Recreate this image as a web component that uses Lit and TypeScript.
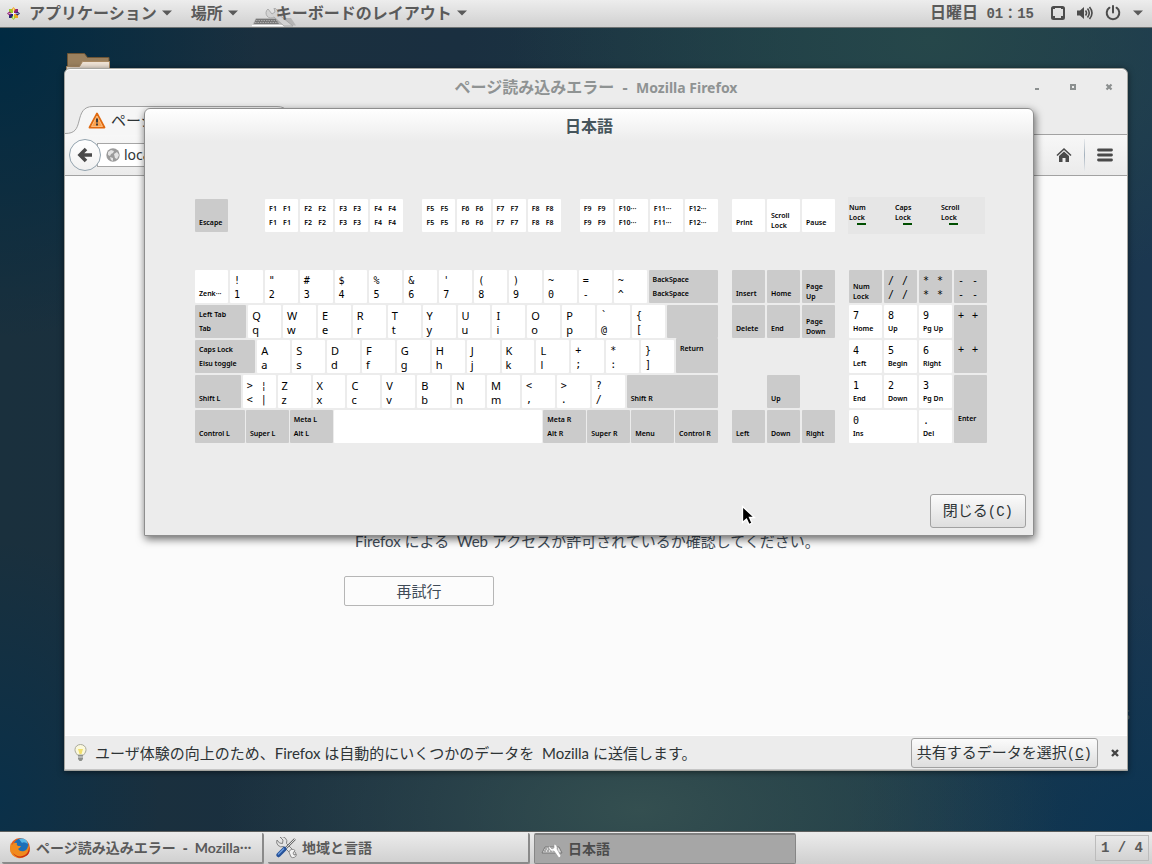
import { LitElement, html, svg, css, nothing } from "lit";
import { customElement, property } from "lit/decorators.js";
import { classMap } from "lit/directives/class-map.js";
import { styleMap } from "lit/directives/style-map.js";

interface KeyDef {
  w?: number;
  dark?: boolean;
  rows: string[][];
  kind?: string;
}

const U = 18;
const light = (top: string, bottom: string): KeyDef => ({ w: U, rows: [[top], [bottom]] });
const dark = (w: number, top: string, bottom: string, kind = ""): KeyDef => ({
  w,
  dark: true,
  rows: [[top], [bottom]],
  kind,
});
const pair = (label: string): KeyDef => ({ w: U, rows: [[label, label], [label, label]] });
const single = (label: string): KeyDef => light(label, label);
const letters = (chars: string): KeyDef[] => [...chars].map((c) => light(c, c.toLowerCase()));

const FUNCTION_GROUPS: KeyDef[][] = [
  ["F1", "F2", "F3", "F4"].map(pair),
  ["F5", "F6", "F7", "F8"].map(pair),
  [pair("F9"), single("F10···"), single("F11···"), single("F12···")],
];

const MAIN_ROWS: KeyDef[][] = [
  [
    light("", "Zenk···"),
    light("!", "1"),
    light('"', "2"),
    light("#", "3"),
    light("$", "4"),
    light("%", "5"),
    light("&", "6"),
    light("'", "7"),
    light("(", "8"),
    light(")", "9"),
    light("~", "0"),
    light("=", "-"),
    light("~", "^"),
    dark(38, "BackSpace", "BackSpace"),
  ],
  [
    dark(28, "Left Tab", "Tab"),
    ...letters("QWERTYUIOP"),
    light("`", "@"),
    light("{", "["),
    dark(28, "", ""),
  ],
  [
    dark(33, "Caps Lock", "Eisu toggle"),
    ...letters("ASDFGHJKL"),
    light("+", ";"),
    light("*", ":"),
    light("}", "]"),
    dark(23, "Return", "", "joined"),
  ],
  [
    dark(25, "", "Shift L"),
    { w: U, rows: [[">", "¦"], ["<", "|"]] },
    ...letters("ZXCVBNM"),
    light("<", ","),
    light(">", "."),
    light("?", "/"),
    dark(50, "", "Shift R"),
  ],
  [
    dark(50, "", "Control L"),
    dark(43, "", "Super L"),
    dark(43, "Meta L", "Alt L"),
    { w: 209, rows: [[""], [""]] },
    dark(43, "Meta R", "Alt R"),
    dark(43, "", "Super R"),
    dark(43, "", "Menu"),
    dark(43, "", "Control R"),
  ],
];

const stack = (a: string, b: string, isDark: boolean): KeyDef => ({
  dark: isDark,
  rows: [[a], [b]],
  kind: "stack",
});

const NAV: (KeyDef | null)[] = [
  dark(0, "", "Insert"),
  dark(0, "", "Home"),
  stack("Page", "Up", true),
  dark(0, "", "Delete"),
  dark(0, "", "End"),
  stack("Page", "Down", true),
  null,
  null,
  null,
  null,
  dark(0, "", "Up"),
  null,
  dark(0, "", "Left"),
  dark(0, "", "Down"),
  dark(0, "", "Right"),
];

const NUMPAD: KeyDef[] = [
  stack("Num", "Lock", true),
  { ...pair("/"), dark: true },
  { ...pair("*"), dark: true },
  { ...pair("-"), dark: true },
  light("7", "Home"),
  light("8", "Up"),
  light("9", "Pg Up"),
  { ...pair("+"), dark: true, kind: "tall" },
  light("4", "Left"),
  light("5", "Begin"),
  light("6", "Right"),
  light("1", "End"),
  light("2", "Down"),
  light("3", "Pg Dn"),
  dark(0, "", "Enter", "tall"),
  { rows: [["0"], ["Ins"]], kind: "wide" },
  light(".", "Del"),
];

const LEDS = [
  ["Num", "Lock"],
  ["Caps", "Lock"],
  ["Scroll", "Lock"],
];

@customElement("kb-key")
class KbKey extends LitElement {
  @property({ attribute: false }) def: KeyDef = { rows: [] };

  static styles = css`
    :host {
      display: block;
      min-width: 0;
    }
    .key {
      box-sizing: border-box;
      height: 100%;
      overflow: hidden;
      display: grid;
      grid-template-rows: 14px 14px;
      padding: 3px 0 0 4px;
      border-radius: 1px;
      background: #fff;
      color: #000;
    }
    .dark {
      background: #cbcbcb;
    }
    .row {
      display: grid;
      grid-template-columns: 14px 14px;
      white-space: pre;
      line-height: 14px;
    }
    .small {
      font: 600 7px/14px "Noto Sans", "Noto Sans CJK JP", sans-serif;
    }
    .letter {
      font: 11px/16px "Noto Sans", sans-serif;
    }
    .sign {
      font: 10px/16px "DejaVu Sans Mono", monospace;
    }
    .stack {
      grid-template-rows: 10px 10px;
      padding-top: 12px;
    }
    .stack .small {
      line-height: 10px;
    }
    .tall {
      row-gap: 20px;
    }
    .joined {
      padding-top: 4px;
    }
  `;

  private label(text: string) {
    const kind = text.length > 1 ? "small" : /[A-Za-z]/.test(text) ? "letter" : "sign";
    return html`<span class=${kind}>${text}</span>`;
  }

  render() {
    const { dark: isDark, kind, rows } = this.def;
    const classes: Record<string, boolean> = { key: true, dark: !!isDark };
    if (kind) classes[kind] = true;
    return html`<div class=${classMap(classes)}>
      ${rows.map((r) => html`<div class="row">${r.map((t) => this.label(t))}</div>`)}
    </div>`;
  }
}

@customElement("keyboard-view")
class KeyboardView extends LitElement {
  static styles = css`
    :host {
      display: grid;
      grid-template-columns: minmax(0, 523fr) minmax(0, 103fr) minmax(0, 138fr);
      column-gap: 14px;
      row-gap: 36px;
    }
    .line {
      display: flex;
      gap: 2px;
      height: 33px;
    }
    .line.tight {
      gap: 1px;
    }
    .functions {
      display: grid;
      grid-template-columns: 51fr 138fr 138fr 138fr;
      column-gap: 19px;
      align-content: center;
    }
    .functions .line:first-child {
      padding-right: 18px;
    }
    .main {
      display: grid;
      gap: 2px;
    }
    .pad {
      display: grid;
      grid-auto-rows: 33px;
      gap: 2px;
      align-content: center;
    }
    .three {
      grid-template-columns: repeat(3, minmax(0, 1fr));
    }
    .four {
      grid-template-columns: repeat(4, minmax(0, 1fr));
    }
    .tall {
      grid-row: span 2;
    }
    .wide {
      grid-column: span 2;
    }
    .joined {
      margin-top: -2px;
    }
    .leds {
      display: grid;
      grid-template-columns: 46px 46px 1fr;
      background: #e6e6e6;
      padding: 6px 0 0 1px;
      height: 31px;
      margin-right: 2px;
      margin-left: -1px;
      font: 600 7px/10px "Noto Sans", sans-serif;
      color: #000;
    }
    .led {
      display: block;
      width: 9px;
      height: 2px;
      margin-left: 8px;
      background: #004e00;
    }
  `;

  private key(def: KeyDef) {
    return html`<kb-key
      class=${def.kind || nothing}
      style=${styleMap(def.w ? { flex: `${def.w} 1 0` } : {})}
      .def=${def}
    ></kb-key>`;
  }

  render() {
    return html`
      <div class="functions">
        <div class="line">${this.key(dark(U, "", "Escape"))}</div>
        ${FUNCTION_GROUPS.map((g) => html`<div class="line">${g.map((k) => this.key(k))}</div>`)}
      </div>
      <div class="pad three">
        ${this.key(light("", "Print"))} ${this.key(stack("Scroll", "Lock", false))}
        ${this.key(light("", "Pause"))}
      </div>
      <div class="leds">
        ${LEDS.map(([a, b]) => html`<div>${a}<br />${b}<i class="led"></i></div>`)}
      </div>
      <div class="main">
        ${MAIN_ROWS.map(
          (row, i) =>
            html`<div class=${classMap({ line: true, tight: i === 4 })}>
              ${row.map((k) => this.key(k))}
            </div>`,
        )}
      </div>
      <div class="pad three">
        ${NAV.map((k) => (k ? this.key(k) : html`<span></span>`))}
      </div>
      <div class="pad four">${NUMPAD.map((k) => this.key(k))}</div>
    `;
  }
}

const caret = svg`<svg width="10" height="6" viewBox="0 0 10 6"><path d="M0 0.5h10L5 5.5z" fill="currentColor"/></svg>`;

const wrenchPath =
  "M2 3a5 5 0 0 0 6.500 6.500L17 18a2 2 0 0 0 3-3L11.500 6.500A5 5 0 0 0 5 0l3 3-.5 3.500L4.500 6z";

@customElement("app-root")
class AppRoot extends LitElement {
  static styles = css`
    :host {
      display: grid;
      grid-template-rows: 28px 1fr 33px;
      height: 100vh;
      overflow: hidden;
      font: 15px/20px "Noto Sans", "Noto Sans CJK JP", sans-serif;
      color: #2e3436;
      background:
        radial-gradient(ellipse 420px 200px at 640px 810px, #344f50 0%, #344f5000 100%),
        radial-gradient(ellipse 420px 260px at 930px 40px, #26474a 0%, #26474a00 100%),
        radial-gradient(ellipse 300px 260px at 1152px 840px, #0b3452 0%, #0b345200 100%),
        radial-gradient(ellipse 260px 300px at 0 40px, #002a42 0%, #002a4200 100%),
        radial-gradient(ellipse 160px 260px at 0 800px, #0a3049 0%, #0a304900 100%),
        linear-gradient(90deg, #1a303d, #1a2f40 40%, #1c3a45 70%, #1b3750);
    }
    button,
    input {
      font: inherit;
      color: inherit;
      margin: 0;
    }
    svg {
      flex: none;
    }
    .latin {
      font-family: "Lato", sans-serif;
    }
    .panel {
      display: flex;
      align-items: center;
      padding: 0 9px 1px 6px;
      border-bottom: 1px solid #6e7272;
      background: linear-gradient(#ededed, #d0d0d0);
      color: #5a5a5a;
      font-size: 16px;
      font-weight: 700;
    }
    .panel button {
      display: flex;
      align-items: center;
      gap: 5px;
      border: 0;
      padding: 0;
      background: none;
      position: relative;
      white-space: pre;
    }
    .menus {
      display: flex;
      gap: 19px;
      flex: 1;
    }
    .menus .logo {
      margin-right: 3px;
    }
    .menus .app {
      padding-left: 19px;
    }
    .app-icon {
      position: absolute;
      left: -6px;
      top: 5px;
    }
    .app span {
      position: relative;
    }
    .status {
      display: flex;
      align-items: center;
      gap: 12px;
    }
    .clock {
      margin-right: 5px;
    }
    .mono {
      font-family: "Liberation Mono", "Noto Sans CJK JP", monospace;
      font-size: 14px;
    }
    .desktop {
      position: relative;
    }
    .folder {
      position: absolute;
      left: 66px;
      top: 24px;
    }
    .mark {
      position: absolute;
      right: 22px;
      bottom: 107px;
      font: 14px/18px "Noto Sans", sans-serif;
      color: #4d6a76;
    }
    .browser {
      position: absolute;
      inset: 40px 24px 60px 64px;
      display: flex;
      flex-direction: column;
      border: 1px solid #a5a5a0;
      border-radius: 6px 6px 0 0;
      background: #ececec;
      box-shadow:
        inset 0 1px #fff,
        0 1px 6px #0008;
    }
    .title {
      display: grid;
      grid-template-columns: 1fr auto 1fr;
      align-items: center;
      height: 36px;
      color: #8f9393;
      font-size: 16px;
      font-weight: 700;
      white-space: pre;
    }
    .title .latin {
      font: 700 14px/20px "Noto Sans", sans-serif;
    }
    .title .name {
      grid-column: 2;
    }
    .controls {
      display: flex;
      justify-content: flex-end;
      gap: 24px;
      padding-right: 12px;
    }
    .controls button {
      display: flex;
      border: 0;
      padding: 0;
      background: none;
    }
    .tabs {
      height: 29px;
      border-bottom: 1px solid #a2a2a2;
    }
    .tab {
      position: relative;
      display: flex;
      align-items: center;
      gap: 5px;
      width: 238px;
      height: 30px;
      padding-left: 23px;
      box-sizing: border-box;
      white-space: nowrap;
    }
    .tab > * {
      position: relative;
    }
    .tab .outline {
      position: absolute;
      left: 0;
      top: 0;
    }
    .toolbar {
      display: flex;
      align-items: center;
      height: 40px;
      padding: 0 14px 0 4px;
      border-bottom: 1px solid #a2a2a2;
      background: linear-gradient(#f7f7f7, #ebebeb);
    }
    .toolbar button {
      display: flex;
      border: 0;
      padding: 0;
      background: none;
      color: #4a4a4a;
    }
    .toolbar .back {
      box-sizing: border-box;
      width: 32px;
      height: 32px;
      border: 1px solid #93a3ae;
      border-radius: 50%;
      align-items: center;
      justify-content: center;
      background: linear-gradient(#fff, #f1f1f1);
      position: relative;
      flex: none;
    }
    .address {
      box-sizing: border-box;
      display: flex;
      align-items: center;
      gap: 4px;
      flex: 1;
      height: 24px;
      margin: 0 250px 0 -4px;
      padding-left: 8px;
      border: 1px solid #a6a6a6;
      background: #fff;
    }
    .address input {
      flex: 1;
      min-width: 0;
      border: 0;
      padding: 0;
      background: none;
      font-size: 14px;
      outline: 0;
    }
    .divider {
      width: 1px;
      height: 32px;
      margin: 0 12px;
      background: linear-gradient(#e8eaec, #a4b1bc, #e8eaec);
    }
    .page {
      flex: 1;
      min-height: 0;
      background: #fbfbfb;
      padding: 355px 0 0 279px;
      color: #3f4b57;
    }
    .page p {
      margin: 0 0 25px 11px;
      white-space: pre;
    }
    .retry {
      width: 150px;
      height: 30px;
      border: 1px solid #b6b6b6;
      border-radius: 2px;
      background: #fcfcfc;
    }
    .notice {
      display: flex;
      align-items: center;
      height: 33px;
      padding: 0 8px 0 7px;
      border-top: 1px solid #fff;
      border-bottom: 1px solid #c5c5c5;
      background: #ececec;
    }
    .notice p {
      margin: 0 auto 0 6px;
      white-space: pre;
    }
    .push {
      border: 1px solid #a1a1a1;
      border-radius: 3px;
      background: linear-gradient(#fbfbfb, #dedede);
      white-space: nowrap;
      padding: 0 5px;
      height: 30px;
    }
    .notice .close {
      display: flex;
      border: 0;
      padding: 0;
      margin-left: 13px;
      background: none;
    }
    .dialog {
      position: absolute;
      left: 144px;
      right: 118px;
      top: 80px;
      display: flex;
      flex-direction: column;
      border: 1px solid #8e8e8e;
      border-radius: 6px 6px 0 0;
      background: linear-gradient(#fff, #ececec 32px);
      box-shadow: 1px 3px 8px #0009;
    }
    .dialog h1 {
      margin: 0;
      padding: 7px 0 61px;
      text-align: center;
      font-size: 16px;
      line-height: 20px;
      font-weight: 600;
      color: #46555c;
    }
    .board {
      padding: 0 46px 0 50px;
    }
    .dialog .push {
      align-self: flex-end;
      height: 34px;
      margin: 51px 7px 7px 0;
      padding: 0 12px;
    }
    .pointer {
      position: absolute;
      left: 596px;
      top: 396px;
    }
    .taskbar {
      display: flex;
      align-items: center;
      gap: 4px;
      padding: 0 3px 0 2px;
      border-top: 1px solid #5d605f;
      background: linear-gradient(#ececec, #cfcfcf);
      color: #5a5a5a;
      font-size: 14px;
      font-weight: 700;
    }
    .task {
      box-sizing: border-box;
      flex: 0 1 262px;
      min-width: 0;
      height: 31px;
      display: flex;
      align-items: center;
      gap: 5px;
      padding: 1px 7px 0;
      border: 0;
      border-right: 2px solid #8a8a8a;
      border-bottom: 2px solid #8a8a8a;
      border-radius: 2px;
      background: none;
      white-space: pre;
      overflow: hidden;
    }
    .task.active {
      border: 1px solid #868686;
      border-top: 2px solid #808080;
      padding: 0 6px;
      background: #a6a6a6;
      color: #4c4c4c;
    }
    .pager {
      margin-left: auto;
      padding: 2px 5px;
      border: 1px solid #bcbcbc;
    }
  `;

  render() {
    return html`
      <header class="panel">
        <nav class="menus">
          <button>
            <svg class="logo" width="15" height="15" viewBox="0 0 15 15">
              <path d="M3 3h4v4H3z" fill="#9ccd2a" /><path d="M8 3h4v4H8z" fill="#932279" />
              <path d="M3 8h4v4H3z" fill="#262577" /><path d="M8 8h4v4H8z" fill="#efa724" />
              <path d="M7.500 1l2 2.500-2 2.500-2-2.500z" fill="#efa724" />
              <path d="M7.500 9l2 2.500-2 2.500-2-2.500z" fill="#9ccd2a" />
              <path d="M1 7.500l2.500-2 2.500 2-2.500 2z" fill="#932279" />
              <path d="M14 7.500l-2.500-2-2.500 2 2.500 2z" fill="#262577" />
              <path d="M7.500 2.500v10M2.500 7.500h10" stroke="#fff" stroke-width=".6" />
            </svg>アプリケーション${caret}
          </button>
          <button>場所${caret}</button>
          <button class="app">
            <svg class="app-icon" width="46" height="19" viewBox="0 0 46 19">
              <path d="M1 17.500L5 10h35l5 7.500z" fill="#b5b5b5" />
              <path d="M1 17.500h32" stroke="#fff" stroke-width="1.500" />
              <path d="M5 11h20l3 5H3z" fill="#777" />
              <path d="M5 12.500h21M4 14.500h23" stroke="#aaa" stroke-dasharray="1.500 1" />
              <path d="M17 1a5 5 0 0 0 6 8l10 9h9L27 6a5 5 0 0 0-4-6l1 4-3 2z" fill="#d2d2d2" stroke="#a0a0a0" stroke-width=".8" />
            </svg>
            <span>キーボードのレイアウト</span>${caret}
          </button>
        </nav>
        <div class="status">
          <time class="clock">日曜日<span class="mono"> 01：15</span></time>
          <svg width="14" height="14" viewBox="0 0 14 14">
            <rect x="1" y="1" width="12" height="12" rx="1.500" fill="none" stroke="#4c4c4c" stroke-width="2" />
            <path d="M1 1h3v2H1zM10 1h3v2h-3zM2 10h2v2H2zM10 10h2v2h-2z" fill="#4c4c4c" />
          </svg>
          <svg width="16" height="14" viewBox="0 0 16 14">
            <path d="M0 4.500h3L7 1v12L3 9.500H0z" fill="#4c4c4c" />
            <path d="M8.500 4.500q2 2.500 0 5M10.500 2.500q3.500 4.500 0 9M12.500 1q5 6 0 12" fill="none" stroke="#4c4c4c" stroke-width="1.600" />
          </svg>
          <svg width="16" height="16" viewBox="0 0 16 16">
            <path d="M4.500 2.700a6.300 6.300 0 1 0 7 0M8 1v6.500" fill="none" stroke="#4c4c4c" stroke-width="2" stroke-linecap="round" />
          </svg>
          ${caret}
        </div>
      </header>

      <main class="desktop">
        <svg class="folder" width="44" height="40" viewBox="0 0 44 40">
          <path d="M1.500 38V1.500h17l3 4h21.500V38z" fill="#9a805e" stroke="#6e5535" />
          <path d="M.5 38V14.500h13l3-5h27V38z" fill="#efe3d6" stroke="#a98a63" />
        </svg>
        <span class="mark">S</span>

        <section class="browser">
          <div class="title">
            <span class="name">ページ読み込みエラー  -  <span class="latin">Mozilla Firefox</span></span>
            <div class="controls">
              <button aria-label="最小化"><svg width="12" height="12"><path d="M4 7h4v2H4z" fill="#8b8f8f" /></svg></button>
              <button aria-label="最大化"><svg width="12" height="12"><rect x="4" y="4" width="4" height="4" fill="none" stroke="#8b8f8f" stroke-width="2" /></svg></button>
              <button aria-label="閉じる"><svg width="12" height="12"><path d="M3.500 3.500l5 5M8.500 3.500l-5 5" stroke="#8b8f8f" stroke-width="2.200" /></svg></button>
            </div>
          </div>
          <div class="tabs">
            <div class="tab">
              <svg class="outline" width="238" height="30" viewBox="0 0 238 30">
                <path d="M0 28.500C10 28.500 12 24 14 16S18 1.500 28 1.500H212C222 1.500 224 8 226 16S228 28.500 238 28.500V30H0z" fill="#f6f6f6" />
                <path d="M0 28.500C10 28.500 12 24 14 16S18 1.500 28 1.500H212C222 1.500 224 8 226 16S228 28.500 238 28.500" fill="none" stroke="#a2a2a2" />
              </svg>
              <svg width="18" height="17" viewBox="0 0 18 17">
                <path d="M9 1.500L16.500 15.500H1.500z" fill="#f58a2c" stroke="#e0690f" stroke-width="1.800" stroke-linejoin="round" />
                <path d="M9 4L14.500 14.500H3.500z" fill="#fba04c" stroke="#fdc78f" stroke-width=".8" />
                <path d="M9 6.500v4M9 11.500v2" stroke="#3c3c3c" stroke-width="2" />
              </svg>
              <span>ページ読み込みエラー</span>
            </div>
          </div>
          <div class="toolbar">
            <button class="back" aria-label="戻る">
              <svg width="16" height="16" viewBox="0 0 16 16"><path d="M9 2L3 8l6 6M3.500 8H15" fill="none" stroke="#4a4a4a" stroke-width="3.600" /></svg>
            </button>
            <label class="address">
              <svg width="14" height="14" viewBox="0 0 14 14">
                <circle cx="7" cy="7" r="6.700" fill="#9b9b9b" />
                <path d="M2 4l3-2 3 1-1 2-2 1-1 2-2-1zM8 6l3-2 2 3-2 4-2-1zM4 9l3 1 0 3-2-1z" fill="#e3e3e3" />
              </svg>
              <input aria-label="アドレス" value="localhost" />
            </label>
            <button aria-label="ホーム">
              <svg width="16" height="16" viewBox="0 0 16 16">
                <path d="M1 8.500L8 2l7 6.500" fill="none" stroke="#4a4a4a" stroke-width="1.600" />
                <path d="M3 9l5-4.500L13 9v6H9.500v-4h-3v4H3z" fill="#4a4a4a" />
              </svg>
            </button>
            <i class="divider"></i>
            <button aria-label="メニュー">
              <svg width="16" height="14" viewBox="0 0 16 14"><path d="M1.500 2h13M1.500 7h13M1.500 12h13" stroke="#4a4a4a" stroke-width="2.800" stroke-linecap="round" /></svg>
            </button>
          </div>
          <div class="page">
            <p><span class="latin">Firefox</span> による  <span class="latin">Web</span> アクセスが許可されているか確認してください。</p>
            <button class="retry">再試行</button>
          </div>
          <div class="notice">
            <svg width="17" height="18" viewBox="0 0 17 18">
              <path d="M5.500 11C3.500 8.500 3 7.500 3 5.500a5.500 5 0 0 1 11 0c0 2-.5 3-2.500 5.500z" fill="#faf8dc" stroke="#a9a99b" />
              <path d="M6 5h5l-1.500 5h-2z" fill="#f1df6d" />
              <path d="M6 11h5v4l-1.500 2h-2L6 15z" fill="#8d908b" /><path d="M6 13h5" stroke="#ddd" />
            </svg>
            <p>ユーザ体験の向上のため、<span class="latin">Firefox</span> は自動的にいくつかのデータを  <span class="latin">Mozilla</span> に送信します。</p>
            <button class="push">共有するデータを選択<span class="mono">(<u>C</u>)</span></button>
            <button class="close" aria-label="閉じる"><svg width="8" height="8"><path d="M1 1l6 6M7 1l-6 6" stroke="#444" stroke-width="2.400" /></svg></button>
          </div>
        </section>

        <section class="dialog" role="dialog" aria-labelledby="layout-name">
          <h1 id="layout-name">日本語</h1>
          <keyboard-view class="board"></keyboard-view>
          <button class="push">閉じる<span class="mono">(C)</span></button>
          <svg class="pointer" width="16" height="22" viewBox="0 0 16 22">
            <path d="M1.500 1.500v16l4-3.500 2.500 5.500 3-1.500-2.500-5.500h5z" fill="#000" stroke="#fff" stroke-width="1.300" />
          </svg>
        </section>
      </main>

      <footer class="taskbar">
        <button class="task">
          <svg width="22" height="22" viewBox="0 0 22 22">
            <circle cx="11" cy="11" r="10" fill="#e5601c" />
            <circle cx="12" cy="9" r="7.500" fill="#1d6fb8" />
            <path d="M10 2q7-2 9 5-4-3-6-1z" fill="#57b6e6" />
            <path d="M2 5q0 3 1 3 2-3 5-2-1 2 1 3l3 0q-1 2-3 3 2 3 6 2 4-1 4-6 3 5-1 10-4 4-9 3-8-2-8-10z" fill="#f08a1e" />
            <path d="M3 15q6 7 13 3 4-3 4-8 2 6-3 9-8 5-14-4z" fill="#c92f16" />
          </svg>
          <span>ページ読み込みエラー  -  <span class="latin">Mozilla</span>···</span>
        </button>
        <button class="task">
          <svg width="22" height="22" viewBox="0 0 22 22">
            <path d=${wrenchPath} fill="#e4e4e4" stroke="#777" stroke-width=".9" />
            <path d="M14 15a3.500 3.500 0 0 1 6-1.500L18 16l1 2 2.500-.5A3.500 3.500 0 0 1 16 20z" fill="#f2f2f2" stroke="#777" stroke-width=".8" />
            <path d="M20 2L11 11" stroke="#666" stroke-width="2.400" /><path d="M20 2L11 11" stroke="#ddd" stroke-width="1" />
            <path d="M9.500 12L3.500 18" stroke="#25529a" stroke-width="4.500" stroke-linecap="round" />
            <path d="M9 11.500L3 17.500" stroke="#6d9bdc" stroke-width="1.500" />
          </svg>
          <span>地域と言語</span>
        </button>
        <button class="task active">
          <svg width="22" height="22" viewBox="0 0 22 22">
            <path d="M1 15l3-6h14l3 6z" fill="#dcdcdc" stroke="#777" />
            <path d="M4 11h13M3 13h15" stroke="#777" stroke-dasharray="2 1" />
            <path d="M8 8a4 4 0 0 0 5 5l5 7 2-2-4-7a4 4 0 0 0-3-5l0 4-2 1z" fill="#fff" stroke="#999" stroke-width=".6" />
          </svg>
          <span>日本語</span>
        </button>
        <span class="pager mono">1 / 4</span>
      </footer>
    `;
  }
}
